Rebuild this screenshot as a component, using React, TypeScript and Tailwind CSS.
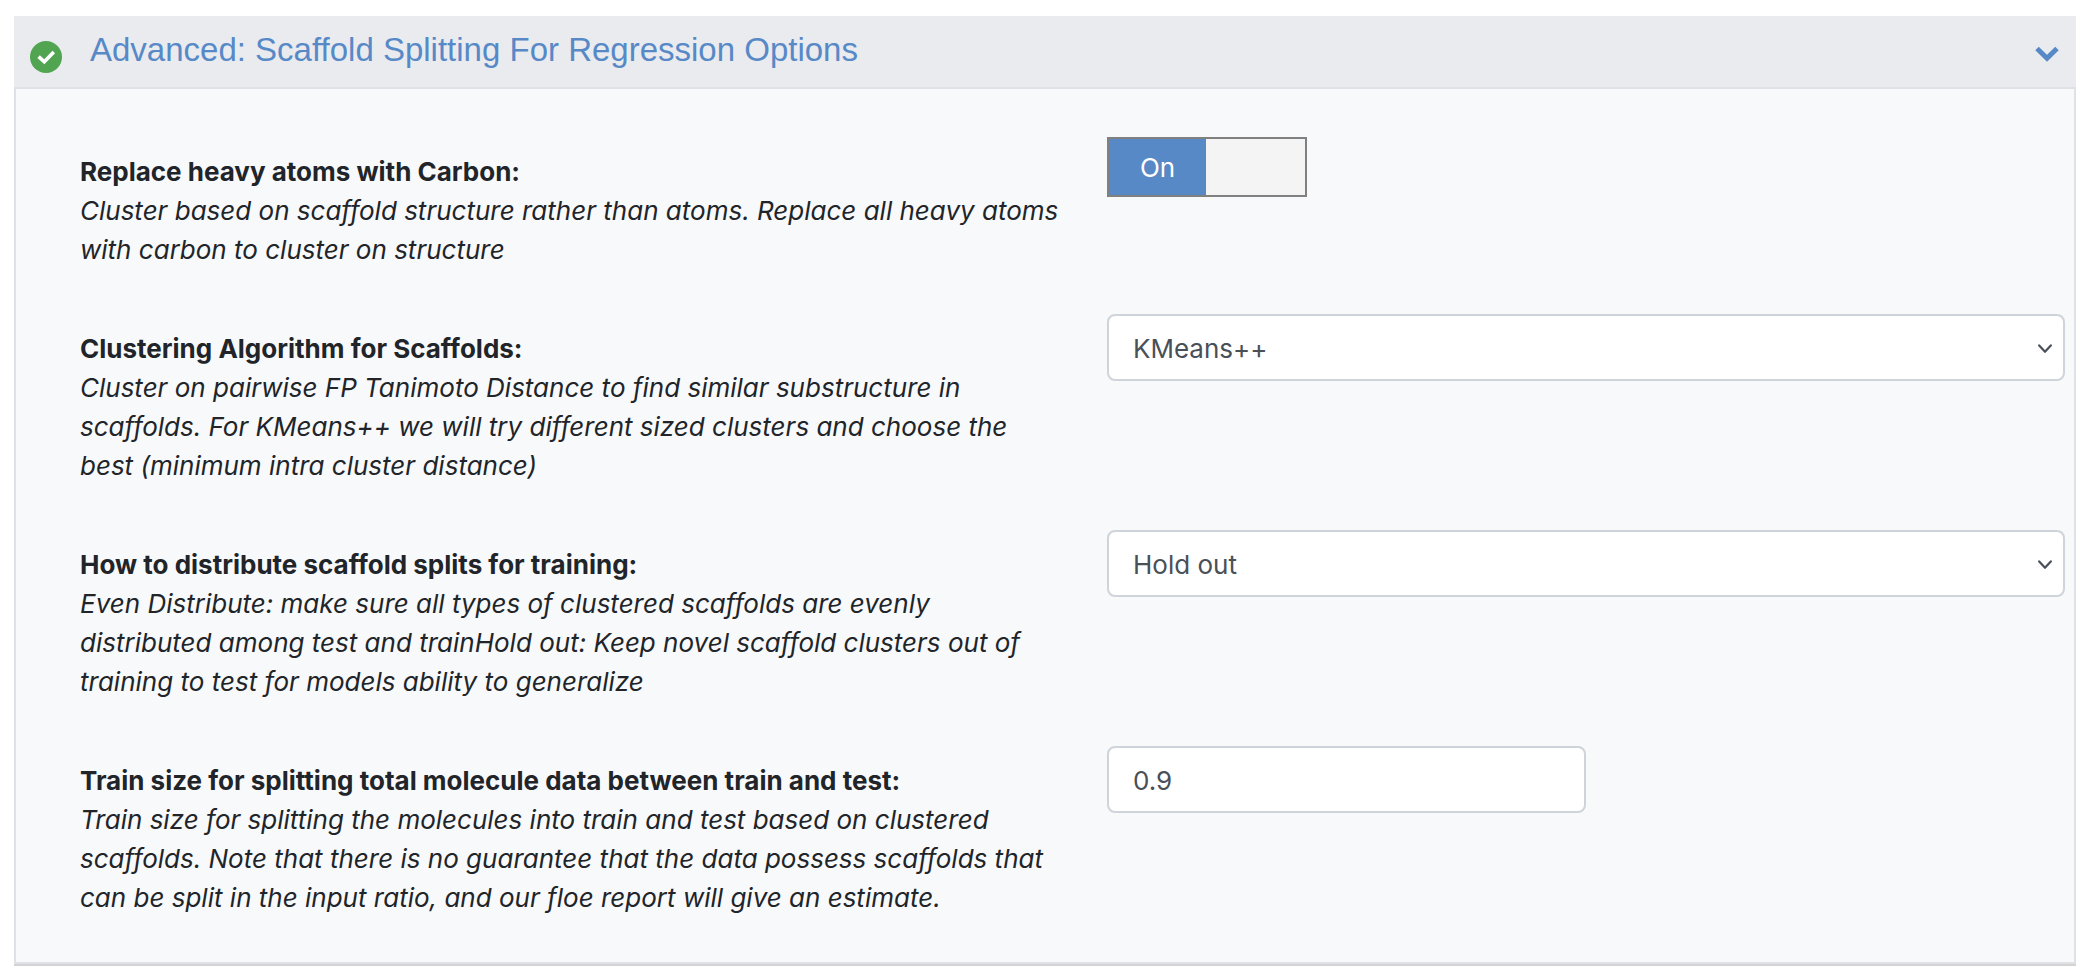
import { useState } from 'react'
import type { ReactNode } from 'react'

const controlClass =
  'block h-[67px] rounded-lg border-2 border-[#ced4da] bg-white px-6 pt-0.5 text-[26px] leading-[39px] text-[#495057]'

function Row({ id, label, help, children }: { id: string; label: string; help: string; children: ReactNode }) {
  return (
    <div className="grid grid-cols-2 gap-x-[69px]">
      <div className="-mr-6 pt-[15px] pb-px text-[26px] leading-[39px]">
        <label htmlFor={id} className="block font-bold">{label}</label>
        <p id={`${id}-help`} className="italic">{help}</p>
      </div>
      <div>{children}</div>
    </div>
  )
}

function Select({ id, options }: { id: string; options: string[] }) {
  return (
    <div className="relative">
      <select id={id} aria-describedby={`${id}-help`} className={`${controlClass} w-full appearance-none`}>
        {options.map((o) => <option key={o}>{o}</option>)}
      </select>
      <svg viewBox="0 0 14 10" className="pointer-events-none absolute top-[30px] right-[13px] h-[10px] w-[14px]" fill="none" stroke="#495057" strokeWidth="2.2" strokeLinecap="round" strokeLinejoin="round">
        <path d="M1.2 1.4 7 7.8l5.8-6.4" />
      </svg>
    </div>
  )
}

function Toggle({ id }: { id: string }) {
  const [on, setOn] = useState(true)
  return (
    <label className="flex h-[60px] w-[200px] cursor-pointer border-2 border-[#808080] bg-[#f4f4f4] text-[26px] text-white">
      <input id={id} type="checkbox" className="sr-only" checked={on} onChange={(e) => setOn(e.target.checked)} />
      <span className={`flex w-[97px] items-center justify-center ${on ? 'bg-[#5889c7]' : 'ml-auto bg-[#808080]'}`}>
        {on ? 'On' : 'Off'}
      </span>
    </label>
  )
}

export default function App() {
  const [open, setOpen] = useState(true)
  const [trainSize, setTrainSize] = useState('0.9')

  return (
    <main className="min-h-screen bg-white pt-4 pr-3 pb-[14px] pl-[14px] font-['Inter','Liberation_Sans',sans-serif] text-[#212529]">
      <section className="border-b-2 border-[#d3d3d3]">
        <h2>
          <button
            onClick={() => setOpen(!open)}
            aria-expanded={open}
            className="flex h-[73px] w-full items-start border-b-2 border-[#dee2e6] bg-[#eaebef] pr-[17px] pl-4 text-left text-[#5889c7]"
          >
            <svg viewBox="0 0 32 32" className="mt-[25px] h-8 w-8">
              <circle cx="16" cy="16" r="16" fill="#51a551" />
              <path d="m8.6 15.6 5.7 5.2 9.5-9.8" fill="none" stroke="#fff" strokeWidth="3.6" />
            </svg>
            <span className="ml-7 flex-1 pt-[14px] font-['Liberation_Sans',sans-serif] text-[33px] leading-[40px]">
              Advanced: Scaffold Splitting For Regression Options
            </span>
            <svg viewBox="0 0 24 16" className="mt-[30px] h-4 w-6">
              <path d="m2 2.5 10 9.8 10-9.8" fill="none" stroke="currentColor" strokeWidth="5" />
            </svg>
          </button>
        </h2>

        {open && (
          <div className="flex flex-col gap-11 border-x-2 border-b-2 border-[#dee2e6] bg-[#f8f9fb] pt-12 pr-[9px] pb-11 pl-16">
            <Row
              id="heavy-atoms"
              label="Replace heavy atoms with Carbon:"
              help="Cluster based on scaffold structure rather than atoms. Replace all heavy atoms with carbon to cluster on structure"
            >
              <Toggle id="heavy-atoms" />
            </Row>
            <Row
              id="algorithm"
              label="Clustering Algorithm for Scaffolds:"
              help="Cluster on pairwise FP Tanimoto Distance to find similar substructure in scaffolds. For KMeans++ we will try different sized clusters and choose the best (minimum intra cluster distance)"
            >
              <Select id="algorithm" options={['KMeans++']} />
            </Row>
            <Row
              id="distribute"
              label="How to distribute scaffold splits for training:"
              help="Even Distribute: make sure all types of clustered scaffolds are evenly distributed among test and trainHold out: Keep novel scaffold clusters out of training to test for models ability to generalize"
            >
              <Select id="distribute" options={['Hold out', 'Even Distribute']} />
            </Row>
            <Row
              id="train-size"
              label="Train size for splitting total molecule data between train and test:"
              help="Train size for splitting the molecules into train and test based on clustered scaffolds. Note that there is no guarantee that the data possess scaffolds that can be split in the input ratio, and our floe report will give an estimate."
            >
              <input
                id="train-size"
                type="text"
                inputMode="decimal"
                aria-describedby="train-size-help"
                value={trainSize}
                onChange={(e) => setTrainSize(e.target.value)}
                className={`${controlClass} w-1/2`}
              />
            </Row>
          </div>
        )}
      </section>
    </main>
  )
}
